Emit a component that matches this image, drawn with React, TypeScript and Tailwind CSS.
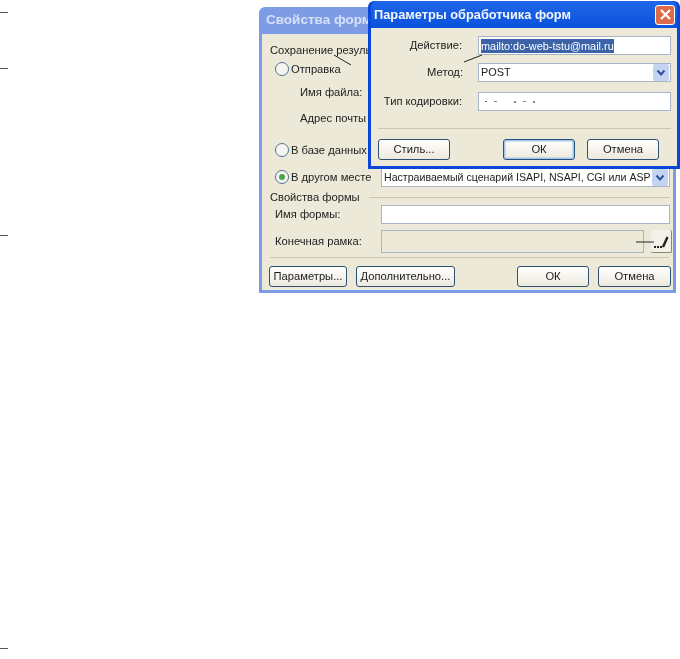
const btn =
  "flex items-center justify-center rounded-[3px] border border-[#2f5070] bg-gradient-to-b from-white to-[#ece9dc] text-[11.2px] text-[#1c1c1c]";
const field = "h-[19px] border border-[#a9b4c4] bg-white";

function Radio({ checked }: { checked?: boolean }) {
  return (
    <span className="flex h-[14px] w-[14px] shrink-0 items-center justify-center rounded-full border-[1.5px] border-[#4f7391] bg-[#f6f6f0]">
      {checked && <span className="h-[6px] w-[6px] rounded-full bg-[#4da34d]" />}
    </span>
  );
}

function Chevron() {
  return (
    <span className="flex h-[17px] w-[16px] shrink-0 items-center justify-center rounded-[2px] bg-[#c5d3f2]">
      <svg width="10" height="8" viewBox="0 0 10 8" fill="none">
        <path d="M1.5 1.5 5 5.5 8.5 1.5" stroke="#2f4f9f" strokeWidth="2" />
      </svg>
    </span>
  );
}

function BackWindow() {
  return (
    <div className="absolute left-[259px] top-[7px] flex h-[286px] w-[417px] flex-col rounded-t-[6px] bg-[#7e9be6] px-[3px] pb-[3px]">
      <div className="flex h-[27px] shrink-0 items-center pl-[4px] text-[13.5px] font-bold text-[#d5e1f7]">
        Свойства формы
      </div>
      <div className="flex flex-1 flex-col bg-[#ece9d8] pl-[8px] pr-[1px] text-[11.2px] text-[#222]">
        <div className="mt-[8px] h-[16px] leading-[16px]">Сохранение резуль</div>
        <div className="mt-[3px] flex h-[16px] items-center gap-[2px] pl-[5px]">
          <Radio />
          <span>Отправка</span>
        </div>
        <div className="mt-[7px] h-[16px] pl-[30px] leading-[16px]">Имя файла:</div>
        <div className="mt-[10px] h-[16px] pl-[30px] leading-[16px]">Адрес почты</div>
        <div className="mt-[16px] flex h-[16px] items-center gap-[2px] pl-[5px]">
          <Radio />
          <span>В базе данных</span>
        </div>
        <div className="mt-[10px] flex h-[19px] items-center pl-[5px]">
          <div className="flex w-[106px] items-center gap-[2px]">
            <Radio checked />
            <span>В другом месте</span>
          </div>
          <div className="flex h-[19px] w-[289px] items-center justify-between whitespace-nowrap border border-[#a9b4c4] bg-white pl-[2px] pr-[1px] text-[10.6px]">
            <span>Настраиваемый сценарий ISAPI, NSAPI, CGI или ASP</span>
            <Chevron />
          </div>
        </div>
        <div className="mr-[2px] mt-[2px] flex h-[16px] items-center gap-[9px]">
          <span>Свойства формы</span>
          <span className="h-px flex-1 bg-[#c9c6b4]" />
        </div>
        <div className="flex h-[19px] items-center pl-[5px]">
          <span className="w-[106px]">Имя формы:</span>
          <div className="h-[19px] w-[289px] border border-[#a9b4c4] bg-white" />
        </div>
        <div className="mt-[6px] flex h-[23px] items-center pl-[5px]">
          <span className="w-[106px]">Конечная рамка:</span>
          <div className="h-[23px] w-[263px] shrink-0 border border-[#a9b4c4] bg-[#ece9d8]" />
          <button className="ml-[7px] flex h-[23px] w-[21px] shrink-0 items-end justify-center rounded-[2px] border-b border-r border-[#8c8872] bg-[#f4f2e8] pb-[3px]">
            <svg width="17" height="15" viewBox="0 0 17 15">
              <rect x="1" y="12" width="2" height="2" fill="#222" />
              <rect x="4" y="12" width="2" height="2" fill="#222" />
              <rect x="7" y="12" width="2" height="2" fill="#222" />
              <path d="M10 13 14.5 3" stroke="#222" strokeWidth="2.4" />
            </svg>
          </button>
        </div>
        <div className="mr-[3px] mt-[4px] h-px bg-[#c9c6b4]" />
        <div className="-ml-px mt-[8px] flex h-[21px] items-stretch">
          <button className={`${btn} w-[78px]`}>Параметры...</button>
          <button className={`${btn} ml-[9px] w-[99px]`}>Дополнительно...</button>
          <button className={`${btn} ml-[62px] w-[72px]`}>ОК</button>
          <button className={`${btn} ml-[9px] w-[73px]`}>Отмена</button>
        </div>
      </div>
    </div>
  );
}

function FrontWindow() {
  return (
    <div className="absolute left-[368px] top-[1px] flex h-[168px] w-[312px] flex-col rounded-t-[6px] bg-[#0a47d8] px-[3px] pb-[3px]">
      <div className="flex h-[27px] shrink-0 items-center justify-between rounded-t-[6px] bg-gradient-to-b from-[#1f66e8] to-[#0a52dc] pl-[3px] pr-[2px] text-[12.8px] font-bold text-[#f2f6ff]">
        <span>Параметры обработчика форм</span>
        <span className="flex h-[20px] w-[20px] items-center justify-center rounded-[3px] border border-white bg-[#dd6a48]">
          <svg width="13" height="13" viewBox="0 0 13 13">
            <path d="M2 2 11 11M11 2 2 11" stroke="#fff" strokeWidth="2.2" />
          </svg>
        </span>
      </div>
      <div className="flex flex-1 flex-col bg-[#ece9d8] pl-[7px] pr-[6px] text-[11.2px] text-[#222]">
        <div className="mt-[8px] flex items-center">
          <span className="w-[84px] text-right">Действие:</span>
          <div className={`${field} ml-[16px] flex w-[193px] items-center pl-[2px] text-[10.9px]`}>
            <span className="bg-[#3c62a8] leading-[14px] text-white">mailto:do-web-tstu@mail.ru</span>
          </div>
        </div>
        <div className="mt-[8px] flex items-center">
          <span className="w-[85px] text-right">Метод:</span>
          <div className={`${field} ml-[15px] flex w-[193px] items-center justify-between pl-[2px] pr-px text-[10.9px]`}>
            <span>POST</span>
            <Chevron />
          </div>
        </div>
        <div className="mt-[10px] flex items-center">
          <span className="w-[84px] whitespace-nowrap text-right">Тип кодировки:</span>
          <div className={`${field} ml-[16px] flex w-[193px] items-center gap-[7px] pl-[6px]`}>
            <span className="h-px w-[2px] bg-[#666]" />
            <span className="h-px w-[3px] bg-[#888]" />
            <span className="ml-[10px] h-[2px] w-[2px] bg-[#888]" />
            <span className="h-px w-[3px] bg-[#888]" />
            <span className="h-[2px] w-[2px] bg-[#888]" />
          </div>
        </div>
        <div className="mt-[17px] h-px bg-[#c9c6b4]" />
        <div className="mt-[10px] flex h-[21px] items-stretch">
          <button className={`${btn} w-[72px]`}>Стиль...</button>
          <button className={`${btn} ml-[53px] w-[72px] border-[#24527e] shadow-[inset_0_0_0_1.5px_#a9c4e8]`}>ОК</button>
          <button className={`${btn} ml-[12px] w-[72px]`}>Отмена</button>
        </div>
      </div>
    </div>
  );
}

export default function App() {
  return (
    <div className="relative h-[659px] w-[680px] overflow-hidden bg-white font-['Liberation_Sans',sans-serif] blur-[0.3px]">
      {/* поля страницы */}
      <div className="absolute left-0 top-[12px] h-px w-[8px] bg-[#555]" />
      <div className="absolute left-0 top-[68px] h-px w-[8px] bg-[#555]" />
      <div className="absolute left-0 top-[235px] h-px w-[8px] bg-[#555]" />
      <div className="absolute left-0 top-[648px] h-px w-[8px] bg-[#555]" />

      <BackWindow />
      <FrontWindow />

      {/* выноски поверх окон */}
      <svg className="absolute left-0 top-0" width="680" height="300" fill="none">
        <path d="M334 55 351 65" stroke="#222" />
        <path d="M464 62 482 55" stroke="#222" />
        <path d="M636 242H654" stroke="#222" />
      </svg>
    </div>
  );
}
